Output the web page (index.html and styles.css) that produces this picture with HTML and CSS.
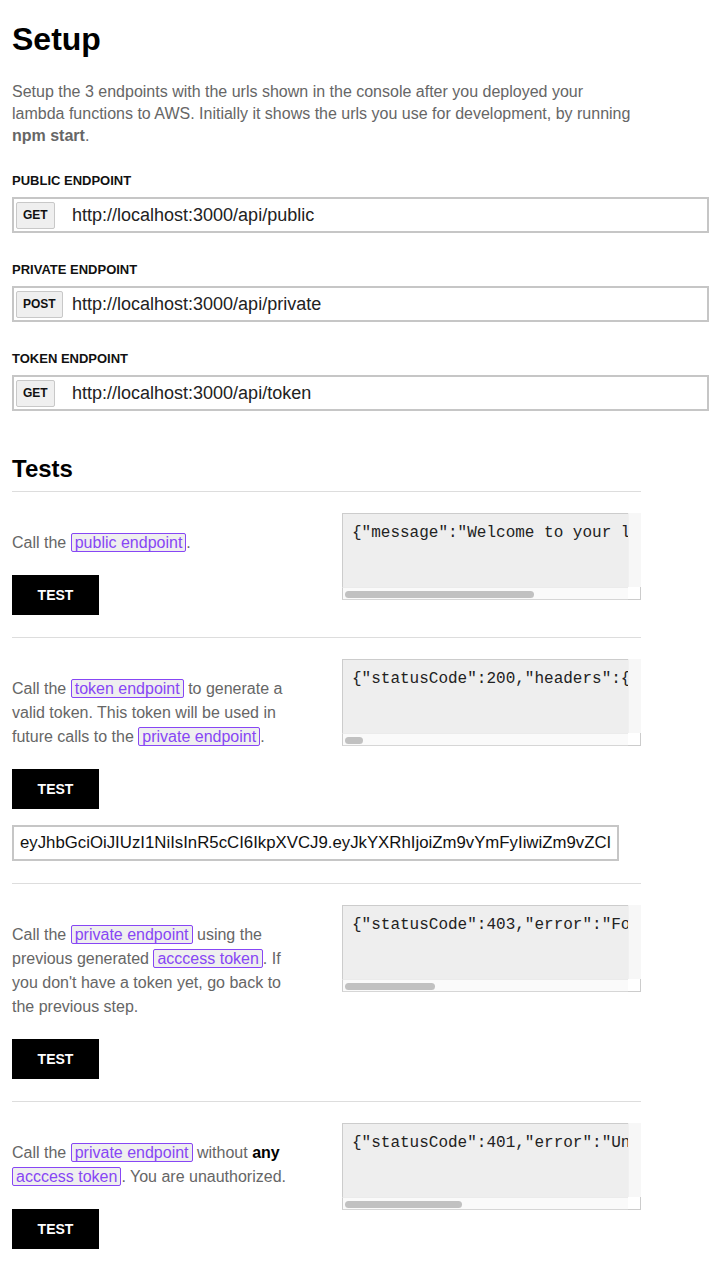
FILE: index.html
```html
<!DOCTYPE html>
<html lang="en">
<head>
<meta charset="utf-8">
<title>Setup</title>
<link rel="stylesheet" href="styles.css">
</head>
<body>
<div class="page">
  <h1 class="title">Setup</h1>
  <p class="intro">Setup the 3 endpoints with the urls shown in the console after you deployed your lambda functions to AWS. Initially it shows the urls you use for development, by running <strong>npm start</strong>.</p>

  <div class="endpoint-group">
    <div class="field-label">Public endpoint</div>
    <div class="endpoint">
      <div class="method-slot"><span class="method">GET</span></div>
      <input class="url" type="text" value="http://localhost:3000/api/public">
    </div>
  </div>

  <div class="endpoint-group">
    <div class="field-label">Private endpoint</div>
    <div class="endpoint">
      <div class="method-slot"><span class="method">POST</span></div>
      <input class="url" type="text" value="http://localhost:3000/api/private">
    </div>
  </div>

  <div class="endpoint-group">
    <div class="field-label">Token endpoint</div>
    <div class="endpoint">
      <div class="method-slot"><span class="method">GET</span></div>
      <input class="url" type="text" value="http://localhost:3000/api/token">
    </div>
  </div>

  <h2 class="tests-title">Tests</h2>

  <div class="test">
    <div class="test-main">
      <p class="desc">Call the <a class="link" href="#">public endpoint</a>.</p>
      <button class="test-btn" type="button">TEST</button>
    </div>
    <div class="result">
      <pre class="result-code">{"message":"Welcome to your lambda API"}</pre>
      <div class="vtrack"></div>
      <div class="htrack"><div class="thumb" style="width:189px"></div></div>
      <div class="corner"></div>
    </div>
  </div>

  <div class="test">
    <div class="test-main">
      <p class="desc">Call the <a class="link" href="#">token endpoint</a> to generate a valid token. This token will be used in future calls to the <a class="link" href="#">private endpoint</a>.</p>
      <button class="test-btn" type="button">TEST</button>
      <input class="token" type="text" readonly value="eyJhbGciOiJIUzI1NiIsInR5cCI6IkpXVCJ9.eyJkYXRhIjoiZm9vYmFyIiwiZm9vZCI6ImJhciIsImlhdCI6MTUwMDAwMDAwMH0.Qk9fY2xhc3NpY19zZWNyZXRfc2lnbmF0dXJl">
    </div>
    <div class="result">
      <pre class="result-code">{"statusCode":200,"headers":{"Access-Control-Allow-Origin":"*"},"body":"{\"token\":\"eyJhbGciOiJIUzI1NiIsInR5cCI6IkpXVCJ9\"}"}</pre>
      <div class="vtrack"></div>
      <div class="htrack"><div class="thumb" style="width:18px"></div></div>
      <div class="corner"></div>
    </div>
  </div>

  <div class="test">
    <div class="test-main">
      <p class="desc">Call the <a class="link" href="#">private endpoint</a> using the previous generated <a class="link" href="#">acccess token</a>. If you don't have a token yet, go back to the previous step.</p>
      <button class="test-btn" type="button">TEST</button>
    </div>
    <div class="result">
      <pre class="result-code">{"statusCode":403,"error":"Forbidden","message":"Missing or invalid authorization token"}</pre>
      <div class="vtrack"></div>
      <div class="htrack"><div class="thumb" style="width:90px"></div></div>
      <div class="corner"></div>
    </div>
  </div>

  <div class="test">
    <div class="test-main">
      <p class="desc">Call the <a class="link" href="#">private endpoint</a> without <b>any</b> <a class="link" href="#">acccess token</a>. You are unauthorized.</p>
      <button class="test-btn" type="button">TEST</button>
    </div>
    <div class="result">
      <pre class="result-code">{"statusCode":401,"error":"Unauthorized","message":"Missing token"}</pre>
      <div class="vtrack"></div>
      <div class="htrack"><div class="thumb" style="width:117px"></div></div>
      <div class="corner"></div>
    </div>
  </div>
</div>
</body>
</html>
```
FILE: styles.css
```css
* {
  box-sizing: border-box;
}

body {
  margin: 0;
  padding: 0 12px;
  background: #fff;
  color: #111;
  font-family: "Liberation Sans", Arial, sans-serif;
}

.page {
  width: 629px;
}

.title {
  margin: 21px 0 23px;
  font-size: 32px;
  line-height: 37px;
  font-weight: bold;
  color: #000;
}

.intro {
  width: 624px;
  margin: 0 0 25px;
  font-size: 16px;
  line-height: 22px;
  color: #666;
}

.endpoint-group {
  margin-bottom: 28px;
}

.field-label {
  margin: 0 0 7px;
  font-size: 13px;
  line-height: 18px;
  font-weight: bold;
  text-transform: uppercase;
  color: #111;
}

.endpoint {
  width: 697px;
  height: 36px;
  display: flex;
  align-items: center;
  padding: 0 2px;
  border: 2px solid #c6c6c6;
  background: #fff;
}

.method-slot {
  width: 46px;
  flex: 0 0 46px;
  display: flex;
  align-items: center;
}

.method {
  display: inline-block;
  height: 27px;
  padding: 0 6px;
  line-height: 25px;
  font-size: 12px;
  font-weight: bold;
  color: #111;
  background: #efefef;
  border: 1px solid #c8c8c8;
  border-radius: 2px;
}

.url {
  flex: 1;
  min-width: 0;
  margin-left: 10px;
  padding: 0;
  border: none;
  outline: none;
  background: transparent;
  font-family: "Liberation Sans", Arial, sans-serif;
  font-size: 18px;
  color: #222;
}

.tests-title {
  margin: 44px 0 0;
  padding-bottom: 8px;
  font-size: 24px;
  line-height: 28px;
  font-weight: bold;
  color: #000;
  border-bottom: 1px solid #ddd;
}

.test {
  display: grid;
  grid-template-columns: 290px 299px;
  justify-content: space-between;
  align-items: start;
  padding: 21px 0 22px;
  border-bottom: 1px solid #ddd;
}

.test:last-child {
  border-bottom: none;
}

.desc {
  margin: 18px 0 20px;
  font-size: 16px;
  line-height: 24px;
  color: #666;
}

.desc b {
  color: #000;
}

.link {
  padding: 0 3px;
  color: #8746f5;
  background: #efefef;
  border: 1px solid #8746f5;
  border-radius: 2px;
  text-decoration: none;
}

.test-btn {
  display: block;
  width: 87px;
  height: 40px;
  padding: 0;
  border: none;
  border-radius: 0;
  background: #000;
  color: #fff;
  font-family: "Liberation Sans", Arial, sans-serif;
  font-size: 14px;
  font-weight: bold;
}

.token {
  display: block;
  width: 607px;
  height: 36px;
  margin-top: 16px;
  padding: 0 6px;
  border: 2px solid #c6c6c6;
  outline: none;
  background: #fff;
  font-family: "Liberation Sans", Arial, sans-serif;
  font-size: 16.8px;
  color: #111;
}

.result {
  width: 299px;
  height: 87px;
  display: grid;
  grid-template-columns: 1fr 13px;
  grid-template-rows: 1fr 13px;
}

.result-code {
  margin: 0;
  padding: 10px 9px;
  overflow: hidden;
  white-space: pre;
  border-top: 1px solid #ccc;
  border-left: 1px solid #ccc;
  background: #eee;
  color: #222;
  font-family: "Liberation Mono", "Courier New", monospace;
  font-size: 16px;
  line-height: 18px;
}

.vtrack {
  background: #f7f7f7;
  border-left: 1px solid #f0f0f0;
}

.htrack {
  padding: 3px 2px;
  background: #fafafa;
  border-top: 1px solid #ebebeb;
  border-left: 1px solid #ccc;
  border-bottom: 1px solid #d6d6d6;
}

.thumb {
  height: 7px;
  border-radius: 4px;
  background: #c1c1c1;
}

.corner {
  background: #fff;
  border-right: 1px solid #ccc;
  border-bottom: 1px solid #ccc;
}
```
